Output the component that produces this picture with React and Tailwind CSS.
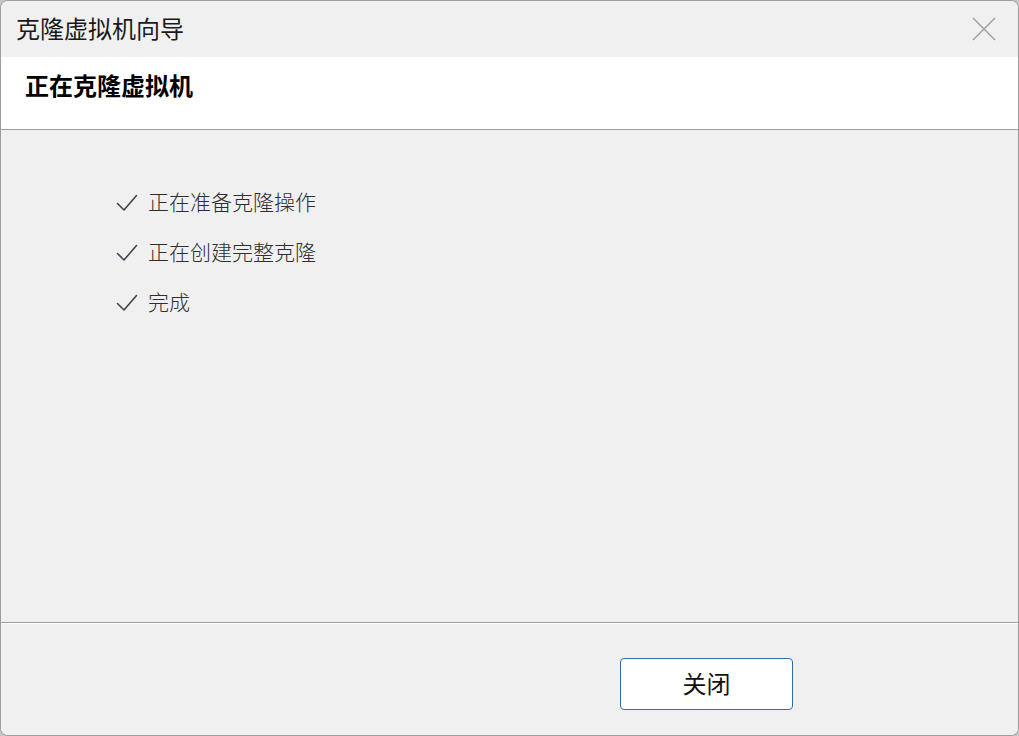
import React from "react";

const font = { fontFamily: '"Microsoft YaHei", "Noto Sans CJK SC", "Noto Sans", sans-serif' };

function Check() {
  return (
    <svg width="22" height="20" viewBox="0 0 22 20" fill="none">
      <path d="M1.5 10.5 L8 17 L20.5 2.5" stroke="#3c4650" strokeWidth="1.6" strokeLinecap="round" strokeLinejoin="round" />
    </svg>
  );
}

export default function App() {
  const steps = ["正在准备克隆操作", "正在创建完整克隆", "完成"];
  return (
    <div className="w-[1019px] h-[736px] bg-[#c4c4c4]" style={font}>
      <div className="w-full h-full flex flex-col rounded-[8px] border border-[#9c9c9c] bg-[#f0f0f0] overflow-hidden">
        {/* title bar */}
        <div className="h-[56px] flex items-center justify-between pl-[15px] pr-[22px] bg-[#f0f0f0] shrink-0">
          <span className="text-[24px] leading-none text-[#1a1a1a] -mt-[3px]">克隆虚拟机向导</span>
          <svg width="24" height="24" viewBox="0 0 24 24" fill="none" className="-mt-[1px]">
            <path d="M1 1 L23 23 M23 1 L1 23" stroke="#a0a0a0" strokeWidth="1.5" />
          </svg>
        </div>
        {/* header */}
        <div className="h-[73px] bg-white flex items-start pt-[16px] pl-[24px] border-b border-[#a0a0a0] shrink-0">
          <span className="text-[24px] font-bold leading-none text-black">正在克隆虚拟机</span>
        </div>
        {/* content */}
        <div className="flex-1 flex flex-col gap-[26px] pl-[115px] pt-[61px] bg-[#f0f0f0]">
          {steps.map((s) => (
            <div key={s} className="flex items-center gap-[10px] h-[24px]">
              <Check />
              <span className="text-[21px] leading-none text-[#2e2e2e] -mt-[4px]" style={{ fontFamily: '"SimSun", "Noto Sans CJK SC", serif', fontWeight: 300 }}>{s}</span>
            </div>
          ))}
        </div>
        {/* footer */}
        <div className="h-[113px] shrink-0 border-t border-[#a0a0a0] bg-[#f0f0f0]">
          <div className="h-full border-t border-white flex items-start pt-[34px] pl-[619px]">
            <button className="w-[173px] h-[52px] bg-white border border-[#2d6db0] rounded-[4px] text-[24px] leading-none text-[#111] flex items-center justify-center pb-[2px]">
              关闭
            </button>
          </div>
        </div>
      </div>
    </div>
  );
}
